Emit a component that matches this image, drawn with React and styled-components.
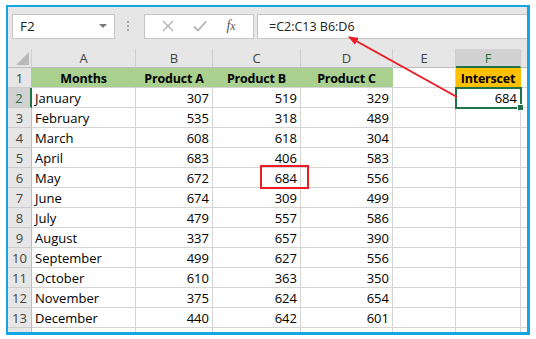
import React from "react";
import styled, { createGlobalStyle } from "styled-components";

const GlobalStyle = createGlobalStyle`
  html, body {
    margin: 0;
    padding: 0;
    background: #fff;
  }
  body {
    font-family: "Open Sans", "Noto Sans", sans-serif;
  }
`;

const Frame = styled.div`
  position: relative;
  box-sizing: border-box;
  margin: 5px 0 0 6px;
  width: 524px;
  height: 330px;
  border: 2px solid #12a6e3;
  border-bottom-width: 3px;
  border-right-width: 3px;
  overflow: hidden;
  background: #e6e6e6;
`;

const Toolbar = styled.div`
  display: flex;
  align-items: center;
  height: 42px;
  padding: 0 0 4px 4px;
  box-sizing: border-box;
  background: #e6e6e6;
`;

const Box = styled.div`
  box-sizing: border-box;
  height: 25px;
  background: #fff;
  border: 1px solid #c6c6c6;
  display: flex;
  align-items: center;
`;

const NameBox = styled(Box)`
  width: 103px;
  padding: 0 7px;
  justify-content: space-between;
  font-size: 13.5px;
  color: #222;
`;

const DropArrow = styled.span`
  width: 0;
  height: 0;
  border-left: 4px solid transparent;
  border-right: 4px solid transparent;
  border-top: 4px solid #7a7a7a;
`;

const Dots = styled.div`
  display: flex;
  flex-direction: column;
  gap: 2px;
  margin: 0 14px 0 12px;
  span {
    width: 2px;
    height: 2px;
    background: #a8a8a8;
  }
`;

const FxBox = styled(Box)`
  width: 110px;
  margin-left: 1px;
  justify-content: space-around;
  padding: 0 8px;
  margin-right: 3px;
`;

const FormulaBox = styled(Box)`
  flex: 1;
  padding-left: 11px;
  border-right: none;
  font-size: 12.5px;
  color: #222;
`;

const Fx = styled.span`
  font-family: "Liberation Serif", serif;
  font-style: italic;
  font-size: 14px;
  color: #555;
`;

const Sheet = styled.div`
  display: grid;
  grid-template-columns: 24px 104px 77px 88px 92px 63px 65px 1fr;
  grid-template-rows: 19px repeat(14, 20px);
  background: #fff;
`;

const Corner = styled.div`
  box-sizing: border-box;
  background: #e6e6e6;
  border-right: 1px solid #cdcdcd;
  border-bottom: 1px solid #bdbdbd;
  position: relative;
  &::after {
    content: "";
    position: absolute;
    right: 2px;
    bottom: 2px;
    width: 0;
    height: 0;
    border-left: 13px solid transparent;
    border-bottom: 13px solid #b9b9b9;
  }
`;

const ColHead = styled.div`
  box-sizing: border-box;
  display: flex;
  align-items: center;
  justify-content: center;
  font-size: 13px;
  color: ${(p) => (p.$active ? "#217346" : "#444")};
  background: ${(p) => (p.$active ? "#d2d2d2" : "#e6e6e6")};
  border-right: 1px solid #cdcdcd;
  border-bottom: ${(p) => (p.$active ? "2px solid #217346" : "1px solid #bdbdbd")};
`;

const RowHead = styled.div`
  box-sizing: border-box;
  display: flex;
  align-items: center;
  justify-content: center;
  font-size: 13px;
  color: ${(p) => (p.$active ? "#217346" : "#444")};
  background: ${(p) => (p.$active ? "#d2d2d2" : "#e6e6e6")};
  border-bottom: 1px solid #cdcdcd;
  border-right: ${(p) => (p.$active ? "2px solid #217346" : "1px solid #bdbdbd")};
`;

const Cell = styled.div`
  box-sizing: border-box;
  display: flex;
  align-items: center;
  justify-content: ${(p) => (p.$align === "right" ? "flex-end" : p.$align === "center" ? "center" : "flex-start")};
  padding: 1px 3px 0 3px;
  font-size: 13px;
  font-weight: ${(p) => (p.$bold ? 700 : 400)};
  color: #000;
  background: ${(p) => p.$bg || "#fff"};
  border-right: 1px solid ${(p) => (p.$bg ? p.$bg : "#d4d4d4")};
  border-bottom: 1px solid #d4d4d4;
  white-space: nowrap;
  overflow: hidden;
`;

const HeadText = styled.span`
  font-size: 12.5px;
  letter-spacing: -0.2px;
`;

const Selection = styled.div`
  position: absolute;
  left: 447px;
  top: 80px;
  width: 67px;
  height: 22px;
  box-sizing: border-box;
  border: 2px solid #217346;
  &::after {
    content: "";
    position: absolute;
    right: -4px;
    bottom: -4px;
    width: 5px;
    height: 5px;
    background: #217346;
    border: 1px solid #fff;
  }
`;

const RedBox = styled.div`
  position: absolute;
  left: 252px;
  top: 158px;
  width: 49px;
  height: 24px;
  box-sizing: border-box;
  border: 2px solid #ed1c24;
`;

const Arrow = styled.svg`
  position: absolute;
  left: 0;
  top: 0;
  pointer-events: none;
`;

const GREEN = "#a9d08e";
const ORANGE = "#ffc000";

const rows = [
  ["January", 307, 519, 329],
  ["February", 535, 318, 489],
  ["March", 608, 618, 304],
  ["April", 683, 406, 583],
  ["May", 672, 684, 556],
  ["June", 674, 309, 499],
  ["July", 479, 557, 586],
  ["August", 337, 657, 390],
  ["September", 499, 627, 556],
  ["October", 610, 363, 350],
  ["November", 375, 624, 654],
  ["December", 440, 642, 601],
];

const cols = ["A", "B", "C", "D", "E", "F", "G"];

export default function App() {
  return (
    <>
      <GlobalStyle />
      <Frame>
        <Toolbar>
          <NameBox>
            <span>F2</span>
            <DropArrow />
          </NameBox>
          <Dots>
            <span />
            <span />
            <span />
          </Dots>
          <FxBox>
            <svg width="12" height="12" viewBox="0 0 12 12">
              <path d="M1 1L11 11M11 1L1 11" stroke="#b4b4b4" strokeWidth="1.4" />
            </svg>
            <svg width="14" height="12" viewBox="0 0 14 12">
              <path d="M1 6.5L5 10.5L13 1.5" stroke="#b4b4b4" strokeWidth="1.8" fill="none" />
            </svg>
            <Fx>
              f<small>x</small>
            </Fx>
          </FxBox>
          <FormulaBox>=C2:C13 B6:D6</FormulaBox>
        </Toolbar>

        <Sheet>
          <Corner />
          {cols.map((c) => (
            <ColHead key={c} $active={c === "F"}>
              {c === "G" ? "" : c}
            </ColHead>
          ))}

          <RowHead>1</RowHead>
          <Cell $bg={GREEN} $align="center" $bold>
            <HeadText>Months</HeadText>
          </Cell>
          <Cell $bg={GREEN} $align="center" $bold>
            <HeadText>Product A</HeadText>
          </Cell>
          <Cell $bg={GREEN} $align="center" $bold>
            <HeadText>Product B</HeadText>
          </Cell>
          <Cell $bg={GREEN} $align="center" $bold>
            <HeadText>Product C</HeadText>
          </Cell>
          <Cell />
          <Cell $bg={ORANGE} $align="center" $bold>
            <HeadText>Interscet</HeadText>
          </Cell>
          <Cell />

          {rows.map((r, i) => (
            <React.Fragment key={r[0]}>
              <RowHead $active={i === 0}>{i + 2}</RowHead>
              <Cell>{r[0]}</Cell>
              <Cell $align="right">{r[1]}</Cell>
              <Cell $align="right">{r[2]}</Cell>
              <Cell $align="right">{r[3]}</Cell>
              <Cell />
              <Cell $align="right">{i === 0 ? 684 : ""}</Cell>
              <Cell />
            </React.Fragment>
          ))}

          <RowHead />
          {cols.map((c) => (
            <Cell key={c} />
          ))}
        </Sheet>

        <Selection />
        <RedBox />
        <Arrow width="520" height="330">
          <defs>
            <marker id="head" markerWidth="10" markerHeight="8" refX="9" refY="4" orient="auto" markerUnits="userSpaceOnUse">
              <path d="M0 0L10 4L0 8Z" fill="#ed1c24" />
            </marker>
          </defs>
          <line x1="449" y1="90" x2="341" y2="30" stroke="#ed1c24" strokeWidth="2" markerEnd="url(#head)" />
        </Arrow>
      </Frame>
    </>
  );
}
